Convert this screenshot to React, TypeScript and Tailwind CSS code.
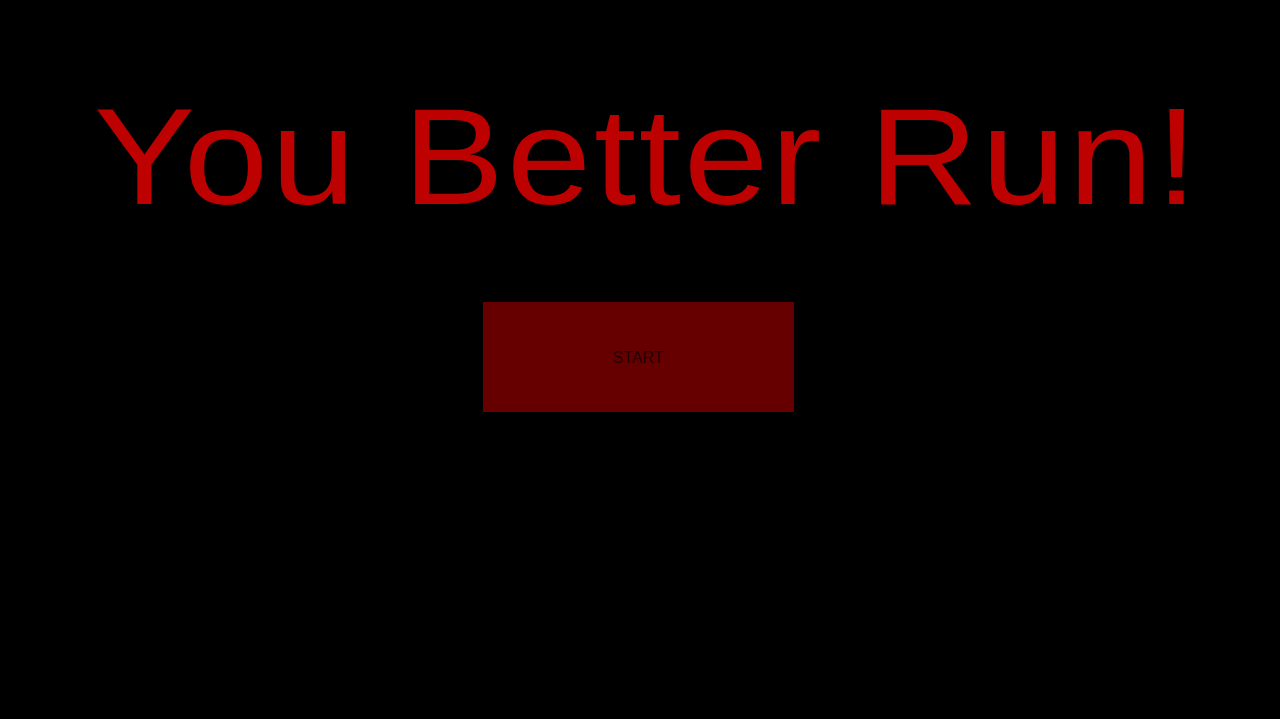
export default function App() {
  return (
    <div className="min-h-screen w-full bg-black font-['Liberation_Sans',Arial,sans-serif]">
      <div className="flex flex-col items-center pt-[80px]">
        {/* Title, drawn a little squat */}
        <h1 className="origin-center scale-y-90 pl-[14px] text-[152px] leading-none tracking-[2.6px] text-[#bd0000] whitespace-nowrap">
          You Better Run!
        </h1>

        {/* Start button */}
        <button className="mt-[70px] mr-[4px] h-[110px] w-[311px] bg-[#660000] pt-[2px] text-[16px] text-[#240000]">
          START
        </button>
      </div>
    </div>
  );
}
